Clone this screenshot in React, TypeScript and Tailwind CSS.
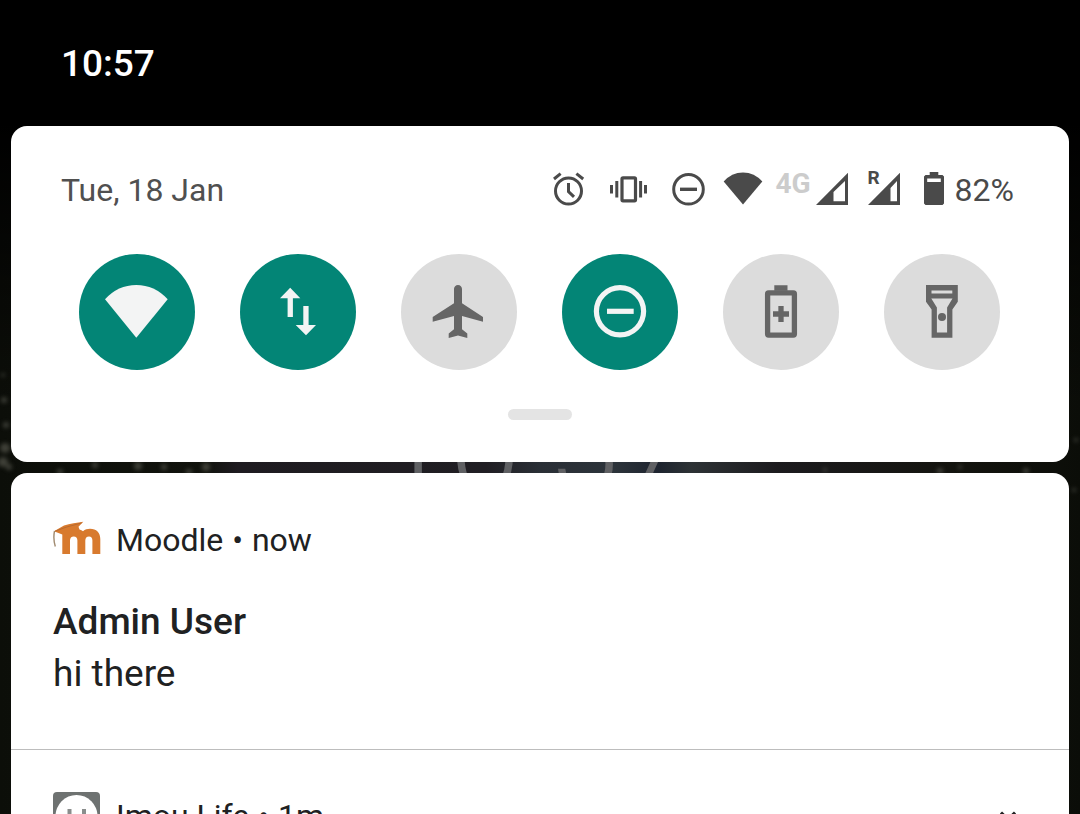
import React, { useState } from 'react';
import { clsx } from 'clsx';

const WifiTileIcon = () => (
  <svg viewBox="0 0 64 64" className="size-16" fill="currentColor">
    <path d="M0 19.3Q13 5 31.3 5T62.7 19.3L31.3 57.7Z" />
  </svg>
);

const DataTileIcon = () => (
  <svg viewBox="0 0 64 64" className="size-16" fill="currentColor">
    <path d="M24.2 7.7 34.3 18.3H26.9V37H21.6V18.3H14Z" />
    <path d="M37.3 26H42.6V45H50L40 55.3 29.7 45H37.3Z" />
  </svg>
);

const AirplaneTileIcon = () => (
  <svg viewBox="0 0 64 64" className="size-16" fill="currentColor">
    <path d="M31 5C28.7 5 27 6.8 27 9V23.3L5.7 37V41.7L27 36V49.3L21.7 53.5V58L31 55.5 40.3 58V53.5L35 49.3V36L56 41.7V37L35 23.3V9C35 6.8 33.3 5 31 5Z" />
  </svg>
);

const DndTileIcon = () => (
  <svg viewBox="0 0 64 64" className="size-16" fill="none" stroke="currentColor" strokeWidth="5.2">
    <circle cx="32" cy="31.3" r="23.6" />
    <path d="M19 31.3H45.7" />
  </svg>
);

const SaverTileIcon = () => (
  <svg viewBox="0 0 64 64" className="size-16" fill="none" stroke="currentColor" strokeWidth="5.3">
    <rect x="18.6" y="12.9" width="26.8" height="42.2" rx="1" />
    <path d="M25.3 8H38.5M24 34H40M32 26V42" />
  </svg>
);

const TorchTileIcon = () => (
  <svg viewBox="0 0 64 64" className="size-16" fill="currentColor">
    <path
      fillRule="evenodd"
      d="M16 5H47.8V21.7L42.4 29.5V57.7H21.6V29.5L16 21.7ZM21.5 10.6V13.4H42.3V10.6ZM21.3 18.4 26.9 27.5V52.5H37.1V27.5L42.5 18.4Z"
    />
    <circle cx="32" cy="37" r="4" />
  </svg>
);

const AlarmIcon = () => (
  <svg viewBox="0 0 32 36" className="w-8 h-9" fill="none" stroke="currentColor" strokeWidth="3">
    <circle cx="15.5" cy="19" r="13" />
    <path d="M1 7 7.6 1.6M23.4 1.6 30.2 7M15.5 11V19.5L21 24.8" />
  </svg>
);

const VibrateIcon = () => (
  <svg viewBox="0 0 37 36" className="w-[37px] h-9" fill="none" stroke="currentColor" strokeWidth="3.2">
    <rect x="12" y="5.8" width="13.5" height="23" rx="1" />
    <path d="M6.8 9V25.5M1.5 13V21.5M30.6 9V25.5M35.5 13V21.5" strokeWidth="3" />
  </svg>
);

const DndIcon = () => (
  <svg viewBox="0 0 33 36" className="w-[33px] h-9" fill="none" stroke="currentColor" strokeWidth="3">
    <circle cx="16.5" cy="17.3" r="14.8" />
    <path d="M8 17.3H25" strokeWidth="3.4" />
  </svg>
);

const WifiIcon = () => (
  <svg viewBox="0 0 40 36" className="w-10 h-9" fill="currentColor">
    <path d="M.7 9.5Q8.5 .4 20 .4T39.3 9.5L20 32.5Z" />
  </svg>
);

const SignalIcon = ({ roaming = false }: { roaming?: boolean }) => (
  <svg viewBox="0 0 32 36" className="w-8 h-9" fill="currentColor">
    <path
      fillRule="evenodd"
      d={roaming
        ? 'M0 33 32 .7V33ZM22.5 16V29.3H29V9Z'
        : 'M0 33 32 .7V33ZM17.5 20V29.3H29V9Z'}
    />
  </svg>
);

const BatteryIcon = () => (
  <svg viewBox="0 0 20 36" className="w-5 h-9" fill="currentColor">
    <path fillRule="evenodd" d="M5.7 0H14.3V3H18.5L20 4.5V31.5L18.5 33H1.5L0 31.5V4.5L1.5 3H5.7ZM3.2 6.6V10H16.8V6.6Z" />
  </svg>
);

const MoodleLogo = () => (
  <svg viewBox="0 0 48 48" className="size-12">
    <path
      fill="#d87a2e"
      d="M9.3 38V18.5L1 15.3 11 9.5C17 7.5 24 6.5 30.3 5.7L25.5 10.8 26.5 13.5C28 14 29 14.5 30 15.2 32 13.6 34.3 12.8 37 12.8 43.5 12.8 47.3 16.8 47.3 23V38H39.4V24.5C39.4 21.8 38.2 20.4 36 20.4 33.6 20.4 32.3 22 32.3 24.5V38H24.4V24.5C24.4 21.8 23 20.4 20.8 20.4 18.3 20.4 17 22 17 24.5V38Z"
    />
    <path d="M2 15.2 13 11.2 28.5 7" fill="none" stroke="#b96a2e" strokeWidth="1" />
    <path d="M1.5 15C.5 20 .6 25 2.3 30.5" fill="none" stroke="#a08a70" strokeWidth="1.4" />
  </svg>
);

const ImouLogo = () => (
  <svg viewBox="0 0 48 48" className="size-12">
    <rect width="47" height="47" rx="4" fill="#6e7271" />
    <circle cx="23.5" cy="24" r="21" fill="#fff" />
    <path d="M16.5 17V25M31 17V25" stroke="#8a8d8c" strokeWidth="4" />
    <path d="M14 33Q23.5 40 33 33" fill="none" stroke="#8a8d8c" strokeWidth="3" />
  </svg>
);

// blurred photo wallpaper behind the shade, with the lock screen clock on it
const Wallpaper = () => (
  <div className="absolute inset-0 overflow-hidden" aria-hidden="true">
    <svg viewBox="0 0 1080 814" preserveAspectRatio="none" className="absolute inset-0 size-full">
      <defs>
        <linearGradient id="fade" x1="0" y1="0" x2="0" y2="1">
          <stop offset=".15" stopColor="#000" />
          <stop offset=".5" stopColor="#000" stopOpacity="0" />
        </linearGradient>
        <linearGradient id="strip" x1="0" y1="0" x2="1" y2="0">
          <stop offset="0" stopColor="#0c0e09" />
          <stop offset=".19" stopColor="#11130d" />
          <stop offset=".22" stopColor="#1e1b20" />
          <stop offset=".45" stopColor="#201e23" />
          <stop offset=".5" stopColor="#2a2f36" />
          <stop offset=".57" stopColor="#2c333a" />
          <stop offset=".61" stopColor="#1e242f" />
          <stop offset=".64" stopColor="#2d3235" />
          <stop offset=".72" stopColor="#1c1b1e" />
          <stop offset=".88" stopColor="#14140f" />
          <stop offset="1" stopColor="#0b0d08" />
        </linearGradient>
        <filter id="soft"><feGaussianBlur stdDeviation="2" /></filter>
      </defs>
      <rect width="1080" height="814" fill="url(#strip)" />
      <g filter="url(#soft)" fill="#6b6b60" opacity=".55">
        <circle cx="5" cy="448" r="5" /><circle cx="3" cy="462" r="5" /><circle cx="9" cy="467" r="3" />
        <circle cx="4" cy="400" r="3" /><circle cx="6" cy="425" r="3" /><circle cx="3" cy="375" r="2" />
        <circle cx="60" cy="472" r="3" /><circle cx="95" cy="465" r="3" /><circle cx="138" cy="466" r="4" />
        <circle cx="164" cy="467" r="3" /><circle cx="189" cy="472" r="3" /><circle cx="206" cy="467" r="4" />
        <circle cx="825" cy="470" r="2" /><circle cx="940" cy="471" r="3" /><circle cx="960" cy="467" r="2" />
        <circle cx="1026" cy="471" r="3" /><circle cx="1076" cy="440" r="2" /><circle cx="1074" cy="490" r="2" />
      </g>
      <rect width="1080" height="814" fill="url(#fade)" />
    </svg>
    <div className="absolute inset-x-0 top-[374px] pr-3 text-center text-[128px] leading-[150px] font-light text-[#5f6063]">10:57</div>
  </div>
);

const tiles = [
  { id: 'wifi', label: 'Wi-Fi', icon: WifiTileIcon, on: true },
  { id: 'data', label: 'Mobile data', icon: DataTileIcon, on: true },
  { id: 'airplane', label: 'Flight mode', icon: AirplaneTileIcon, on: false },
  { id: 'dnd', label: 'Do not disturb', icon: DndTileIcon, on: true },
  { id: 'saver', label: 'Battery saver', icon: SaverTileIcon, on: false },
  { id: 'torch', label: 'Torch', icon: TorchTileIcon, on: false },
];

const NotificationHeader = ({ logo, app, time }: { logo: React.ReactNode; app: string; time: string }) => (
  <div className="flex items-center gap-[15px] h-12 text-[32px] leading-12 text-[#202122]">
    {logo}
    <span>{app} <span className="mx-px">•</span> {time}</span>
  </div>
);

export default function App() {
  const [active, setActive] = useState<string[]>(tiles.filter((t) => t.on).map((t) => t.id));

  const toggle = (id: string) =>
    setActive((prev) => (prev.includes(id) ? prev.filter((x) => x !== id) : [...prev, id]));

  return (
    <div className="relative h-screen overflow-hidden bg-black font-['Roboto',sans-serif]">
      <Wallpaper />

      <div className="relative">
        <header className="bg-black px-[61px] pt-10 pb-[38px] text-white text-[37px] leading-12 font-medium">
          10:57
        </header>

        <div className="flex flex-col gap-[11px] px-[11px]">
          <section className="bg-white rounded-2xl pt-10 pb-[42px]">
            <div className="flex items-center justify-between h-12 pl-[50px] pr-[55px] text-[32px] leading-12 text-[#505050]">
              <span>Tue, 18 Jan</span>
              <div className="flex items-center text-[#4a4a4a]">
                <div className="flex items-center gap-[25px]">
                  <AlarmIcon />
                  <VibrateIcon />
                  <DndIcon />
                </div>
                <div className="flex items-center ml-[18px] gap-3">
                  <WifiIcon />
                  <div className="flex items-center gap-[5px]">
                    <span className="pb-3 text-[28px] leading-9 font-bold text-[#cccccc]">4G</span>
                    <SignalIcon />
                  </div>
                </div>
                <div className="relative ml-5">
                  <SignalIcon roaming />
                  <span className="absolute left-0 -top-1 text-[19px] leading-5 font-bold">R</span>
                </div>
                <div className="flex items-center ml-6 gap-[11px]">
                  <BatteryIcon />
                  <span>82%</span>
                </div>
              </div>
            </div>

            <div className="flex justify-between mt-10 pl-[68px] pr-[69px]">
              {tiles.map(({ id, label, icon: Icon }) => (
                <button
                  key={id}
                  aria-label={label}
                  aria-pressed={active.includes(id)}
                  onClick={() => toggle(id)}
                  className={clsx(
                    'flex items-center justify-center size-[116px] rounded-full',
                    active.includes(id) ? 'bg-[#038576] text-[#f3f4f4]' : 'bg-[#dcdcdc] text-[#666666]'
                  )}
                >
                  <Icon />
                </button>
              ))}
            </div>

            <div className="mx-auto mt-[39px] w-16 h-[11px] rounded-md bg-[#e4e4e4]" />
          </section>

          <main className="bg-white rounded-t-2xl">
            <article className="px-[42px] pt-[43px] pb-[49px] border-b border-[#bdbdbd]">
              <NotificationHeader logo={<MoodleLogo />} app="Moodle" time="now" />
              <div className="mt-8 text-[37px] leading-[52px] text-[#202122]">
                <h2 className="font-medium">Admin User</h2>
                <p>hi there</p>
              </div>
            </article>

            <article className="flex items-center justify-between px-[42px] py-[42px]">
              <NotificationHeader logo={<ImouLogo />} app="Imou Life" time="1m" />
              <button aria-label="Expand" className="text-[#202122]">
                <svg viewBox="0 0 36 36" className="size-9" fill="none" stroke="currentColor" strokeWidth="3">
                  <path d="M10 14.5 17 21.5 24 14.5" />
                </svg>
              </button>
            </article>
          </main>
        </div>
      </div>
    </div>
  );
}
